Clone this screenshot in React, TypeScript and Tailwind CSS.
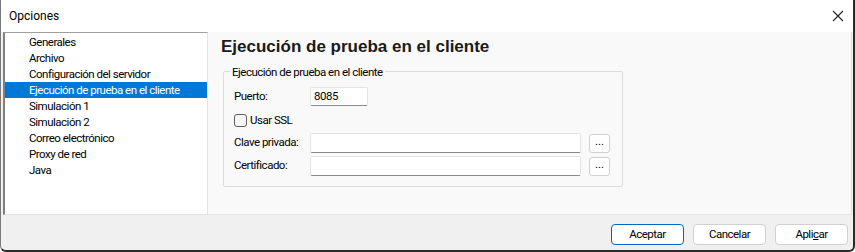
import React from "react";

const items = [
  "Generales",
  "Archivo",
  "Configuración del servidor",
  "Ejecución de prueba en el cliente",
  "Simulación 1",
  "Simulación 2",
  "Correo electrónico",
  "Proxy de red",
  "Java",
];

export default function App() {
  return (
    <div
      className="w-[855px] h-[252px] bg-[#f0f0f0] flex flex-col text-[11.5px] tracking-[-0.5px] whitespace-nowrap text-black border-l border-b-2 border-r-2 border-l-[#7a7a7a] border-b-[#2b2b2b] border-r-[#2b2b2b] rounded-bl-[6px] rounded-br-[6px] overflow-hidden"
      style={{ fontFamily: 'Roboto, "Liberation Sans", Arial, sans-serif' }}
    >
      {/* title bar */}
      <div className="h-[32px] bg-white flex items-center justify-between pl-[8px] pr-[9px] shrink-0">
        <span className="text-[12px] tracking-normal">Opciones</span>
        <svg width="12" height="12" viewBox="0 0 12 12">
          <path d="M1 1L11 11M11 1L1 11" stroke="#222" strokeWidth="1.1" fill="none" />
        </svg>
      </div>
      {/* main area */}
      <div className="flex h-[183px] pl-[2px] pr-[1px] shrink-0">
        <div className="w-[205px] bg-white border-l-2 border-t border-l-[#808080] border-t-[#a0a0a0] border-b border-b-[#e3e3e3] border-r border-r-[#e3e3e3] pt-[1px] flex flex-col">
          {items.map((it, i) => (
            <div
              key={it}
              className={
                "h-[16px] leading-[16px] pl-[24px] " +
                (i === 3 ? "bg-[#0078d7] text-white" : "")
              }
            >
              {it}
            </div>
          ))}
        </div>
        <div className="flex-1 bg-[#f9f9f9] border-r border-r-[#e0e0e0] border-b border-b-[#e8e8e8] pl-[13px] pt-[4px]">
          <div
            className="text-[17px] font-bold leading-[22px] tracking-normal text-[#1a1a1a]"
            style={{ fontFamily: '"Liberation Sans", Arial, sans-serif' }}
          >
            Ejecución de prueba en el cliente
          </div>
          <div className="mt-[13px] ml-[2px] w-[400px] h-[116px] border border-[#dcdcdc] rounded-[2px] relative pt-[15px] pl-[10px]">
            <div className="absolute -top-[8px] left-[6px] bg-[#f9f9f9] px-[2px] leading-[16px]">
              Ejecución de prueba en el cliente
            </div>
            <div className="flex items-center h-[19px]">
              <span className="w-[76px]">Puerto:</span>
              <div className="w-[58px] h-[19px] bg-white border border-[#e5e5e5] border-b-[#8a8a8a] rounded-[2px] pl-[3px] leading-[17px]">
                8085
              </div>
            </div>
            <div className="flex items-center mt-[7px] h-[15px]">
              <div className="w-[13px] h-[13px] border border-[#5f5f5f] rounded-[3px] bg-[#f6f6f6]" />
              <span className="ml-[3px]">Usar SSL</span>
            </div>
            <div className="flex items-center mt-[5px] h-[20px]">
              <span className="w-[76px]">Clave privada:</span>
              <div className="w-[271px] h-[20px] bg-white border border-[#e5e5e5] border-b-[#8a8a8a] rounded-[2px]" />
              <div className="ml-[8px] w-[21px] h-[19px] bg-white border border-[#d0d0d0] rounded-[3px] flex items-center justify-center leading-none pb-[3px] tracking-normal">
                ...
              </div>
            </div>
            <div className="flex items-center mt-[3px] h-[20px]">
              <span className="w-[76px]">Certificado:</span>
              <div className="w-[271px] h-[20px] bg-white border border-[#e5e5e5] border-b-[#8a8a8a] rounded-[2px]" />
              <div className="ml-[8px] w-[21px] h-[19px] bg-white border border-[#d0d0d0] rounded-[3px] flex items-center justify-center leading-none pb-[3px] tracking-normal">
                ...
              </div>
            </div>
          </div>
        </div>
      </div>
      {/* button bar */}
      <div className="flex justify-end gap-[9px] pr-[5px] pt-[9px]">
        <div className="w-[73px] h-[21px] bg-white border border-[#0067c0] rounded-[4px] flex items-center justify-center">
          Aceptar
        </div>
        <div className="w-[73px] h-[21px] bg-white border border-[#d0d0d0] rounded-[4px] flex items-center justify-center">
          Cancelar
        </div>
        <div className="w-[73px] h-[21px] bg-white border border-[#d0d0d0] rounded-[4px] flex items-center justify-center">
          <span>
            Apli<span className="underline">c</span>ar
          </span>
        </div>
      </div>
    </div>
  );
}
